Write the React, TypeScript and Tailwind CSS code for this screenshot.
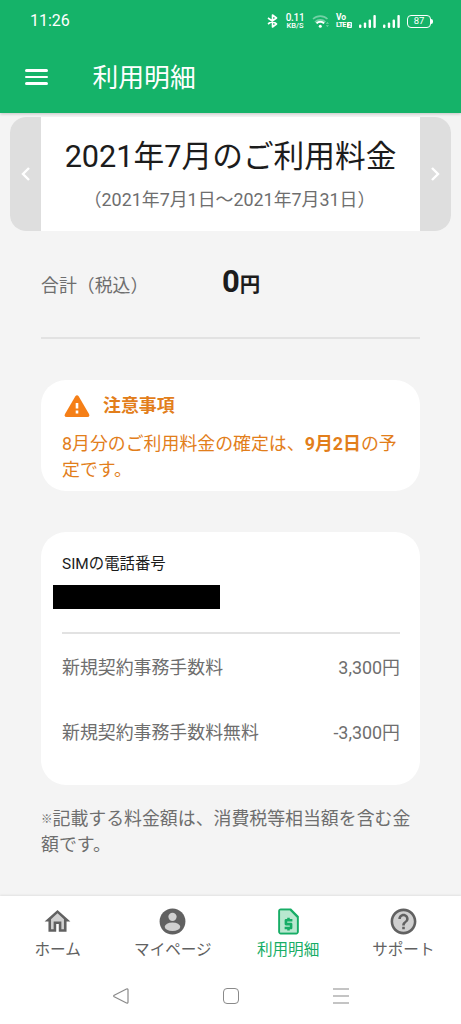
import { ReactNode } from "react";

interface FeeProps {
    name: string
    price: string
}

interface NavItemProps {
    label: string
    active?: boolean
    children: ReactNode
}

const fees: FeeProps[] = [
    { name: '新規契約事務手数料', price: '3,300円' },
    { name: '新規契約事務手数料無料', price: '-3,300円' },
]

function SignalIcon() {
    return (
        <svg className="h-[13px] w-[17px]" viewBox="0 0 17 13" fill="currentColor">
            <rect x="0" y="9.5" width="2.4" height="3.5" rx="1" />
            <rect x="4.8" y="7.5" width="2.4" height="5.5" rx="1" />
            <rect x="9.6" y="4.5" width="2.4" height="8.5" rx="1" />
            <rect x="14.4" y="0" width="2.4" height="13" rx="1" />
        </svg>
    )
}

function StatusBar() {
    return (
        <div className="flex h-[42px] items-center pl-[30px] pr-[28px]">
            <span className="text-[16px] leading-none">11:26</span>
            <div className="ml-auto flex items-center">
                <svg className="h-[14px] w-[11px]" viewBox="0 0 11 14" fill="none" stroke="currentColor" strokeWidth="1.6" strokeLinejoin="round">
                    <path d="M1 4l8.5 6L5.5 13V1l4 3L1 10" />
                </svg>
                <div className="ml-[7px] flex w-[20px] flex-col items-center font-medium">
                    <span className="text-[10px] leading-[9px] tracking-[-0.3px]">0.11</span>
                    <span className="text-[7.5px] leading-[8px]">KB/S</span>
                </div>
                <svg className="ml-[7px] h-[14px] w-[18px]" viewBox="0 0 18 14" fill="none" stroke="currentColor" strokeWidth="1.6">
                    <path d="M1 5a10.500 10.500 0 0 1 14.500 0M3 8a7.500 7.500 0 0 1 10.500 0" opacity=".4" />
                    <path d="M4.500 9.400a5.200 5.200 0 0 1 7.600 0" strokeWidth="2.100" />
                    <circle cx="8.300" cy="12.200" r="1.500" fill="currentColor" stroke="none" />
                    <path d="M13.800 9.800l1.600-1.800 1.600 1.800zM13.800 11.200l1.600 1.800 1.600-1.800z" fill="currentColor" stroke="none" opacity=".4" />
                </svg>
                <div className="ml-[6px] flex w-[17px] flex-col font-bold">
                    <span className="text-[8.5px] leading-[7px]">Vo</span>
                    <span className="flex items-center text-[7.5px] leading-[7px] tracking-[-0.8px]">
                        LTE
                        <span className="ml-[1.5px] h-[6px] w-[5px] shrink-0 rounded-[1px] bg-white text-center text-[5px] leading-[6px] tracking-normal text-[#15b369]">2</span>
                    </span>
                </div>
                <div className="ml-[6px] flex gap-[7px]">
                    <SignalIcon />
                    <SignalIcon />
                </div>
                <div className="ml-[7px] flex items-center">
                    <span className="flex h-[13px] w-[24px] items-center justify-center rounded-[4px] border-[1.5px] border-white text-[9.5px] leading-none">87</span>
                    <span className="h-[5px] w-[2px] rounded-r-sm bg-white" />
                </div>
            </div>
        </div>
    )
}

function NavItem({ label, active, children }: NavItemProps) {
    return (
        <a className={`flex flex-1 flex-col items-center ${active ? 'text-[#17ad66]' : 'text-[#616161]'}`}>
            <svg className="mt-[10px] h-[31px] w-[31px]" viewBox="0 0 24 24" fill="currentColor">
                {children}
            </svg>
            <span className="mt-[2px] text-[15.6px] leading-[22px]">{label}</span>
        </a>
    )
}

export default function App() {
    return (
        <div className="flex h-[1024px] w-full flex-col overflow-hidden bg-[#f4f4f4] font-[Roboto,'Noto_Sans_CJK_JP',sans-serif] text-[#6e6e6e]" lang="ja">
            <header className="z-10 h-[113px] shrink-0 bg-[#15b369] text-white shadow-[0_1px_3px_rgba(0,0,0,0.2)]">
                <StatusBar />
                <div className="flex h-[70px] items-center pl-[25px]">
                    <div className="flex w-[23px] flex-col gap-[4px]">
                        <span className="h-[2.500px] rounded-full bg-white" />
                        <span className="h-[2.500px] rounded-full bg-white" />
                        <span className="h-[2.500px] rounded-full bg-white" />
                    </div>
                    <h1 className="ml-[44.5px] pt-[4px] text-[25.8px] leading-none">利用明細</h1>
                </div>
            </header>

            <main className="flex-1">
                <section className="mx-[10px] mt-[4px] flex h-[114px] overflow-hidden rounded-[16px] bg-white">
                    <button className="flex w-[31px] items-center justify-center bg-[#dedede]">
                        <svg className="h-[14px] w-[9px]" viewBox="0 0 9 14" fill="none" stroke="white" strokeWidth="2.4">
                            <path d="M8 1L2 7l6 6" />
                        </svg>
                    </button>
                    <div className="flex-1 text-center">
                        <h2 className="mt-[17px] text-[30.7px] leading-[46px] whitespace-nowrap text-[#1c1c1c]">2021年7月のご利用料金</h2>
                        <p className="mt-[7px] pr-[2px] text-[17.9px] leading-[26px] whitespace-nowrap">（2021年7月1日～2021年7月31日）</p>
                    </div>
                    <button className="flex w-[31px] items-center justify-center bg-[#dedede]">
                        <svg className="h-[14px] w-[9px]" viewBox="0 0 9 14" fill="none" stroke="white" strokeWidth="2.4">
                            <path d="M1 1l6 6-6 6" />
                        </svg>
                    </button>
                </section>

                <div className="mx-[41px]">
                    <section className="flex h-[108px] items-baseline border-b-2 border-[#e2e2e2] pt-[28px]">
                        <span className="w-[181px] text-[17.9px]">合計（税込）</span>
                        <span className="text-[31px] font-bold text-[#1c1c1c]">0<span className="text-[20.500px]">円</span></span>
                    </section>

                    <section className="mt-[41px] h-[111px] rounded-[25px] bg-white px-[21px] pt-[13px] text-[17.9px] leading-[26px] text-[#e27e1b]">
                        <div className="flex items-center">
                            <svg className="ml-[2px] h-[24px] w-[26px]" viewBox="0 0 26 24">
                                <path d="M11.200 2.500q1.800-2.600 3.600 0l10.200 17.500q1.200 3-1.800 3H2.800q-3 0-1.800-3z" fill="#f57f17" />
                                <path d="M13 9v5.500M13 16.500v3" stroke="white" strokeWidth="2.600" />
                            </svg>
                            <h3 className="ml-[13px] font-bold">注意事項</h3>
                        </div>
                        <div className="mt-[12px] whitespace-nowrap">
                            <p>8月分のご利用料金の確定は、<b>9月2日</b>の予</p>
                            <p>定です。</p>
                        </div>
                    </section>

                    <section className="mt-[41px] h-[253px] rounded-[25px] bg-white pl-[21px] pr-[20px] pt-[21px]">
                        <p className="text-[15.4px] leading-[23px] text-[#1c1c1c]">SIMの電話番号</p>
                        <div className="mt-[9px] -ml-[9px] h-[24px] w-[167px] bg-black" />
                        <div className="mt-[23px] border-b-2 border-[#e2e2e2]" />
                        <div className="mt-[21px] flex flex-col gap-[39px]">
                            {fees.map((fee: FeeProps) => (
                                <div key={fee.name} className="flex justify-between text-[17.9px] leading-[26px]">
                                    <span>{fee.name}</span>
                                    <span>{fee.price}</span>
                                </div>
                            ))}
                        </div>
                    </section>

                    <p className="mt-[21px] text-[17.9px] leading-[26px]">
                        <span className="inline-block w-[11.5px] align-[2px] text-[11.5px] leading-none">※</span>記載する料金額は、消費税等相当額を含む金<br />額です。
                    </p>
                </div>
            </main>

            <footer className="h-[128px] shrink-0 bg-white shadow-[0_-1px_2px_rgba(0,0,0,0.08)]">
                <nav className="flex h-[78px]">
                    <NavItem label="ホーム">
                        <path d="M12 4.300l6 5.500V19h-4v-6h-4v6H6V9.800z" fill="#d0d0d0" />
                        <path d="M12 5.690l5 4.500V18h-2v-6H9v6H7v-7.810l5-4.500M12 3L2 12h3v8h6v-6h2v6h6v-8h3L12 3z" />
                    </NavItem>
                    <NavItem label="マイページ">
                        <circle cx="12" cy="12" r="10" />
                        <circle cx="12" cy="8.400" r="3.200" fill="#d0d0d0" />
                        <ellipse cx="12" cy="16.100" rx="6" ry="3.300" fill="#d0d0d0" />
                    </NavItem>
                    <NavItem label="利用明細" active>
                        <path d="M5.500 3.500h8.500l5 5v12h-13.500z" fill="#b9e8d0" />
                        <path d="M14 2H6c-1.100 0-2 .900-2 2v16c0 1.100.900 2 2 2h12c1.100 0 2-.900 2-2V8l-6-6zm4.500 18.500H5.500V3.500H13L18.500 9v11.500z" />
                        <path d="M11 19h2v-1h1c.55 0 1-.45 1-1v-3c0-.55-.45-1-1-1h-3v-1h4v-2h-2V9h-2v1h-1c-.55 0-1 .45-1 1v3c0 .55.45 1 1 1h3v1H9v2h2v1z" />
                    </NavItem>
                    <NavItem label="サポート">
                        <circle cx="12" cy="12" r="9" fill="#d0d0d0" />
                        <path d="M11 18h2v-2h-2v2zm1-16C6.480 2 2 6.480 2 12s4.480 10 10 10 10-4.480 10-10S17.520 2 12 2zm0 18c-4.410 0-8-3.590-8-8s3.590-8 8-8 8 3.590 8 8-3.590 8-8 8zm0-14c-2.210 0-4 1.790-4 4h2c0-1.100.900-2 2-2s2 .900 2 2c0 2-3 1.750-3 5h2c0-2.250 3-2.500 3-5 0-2.210-1.790-4-4-4z" />
                    </NavItem>
                </nav>
                <div className="flex items-center justify-center gap-[94px] pt-[13px] text-[#8a8a8a]">
                    <svg className="h-[18px] w-[16px]" viewBox="0 0 16 18" fill="none" stroke="currentColor" strokeWidth="1.200" strokeLinejoin="round">
                        <path d="M1.200 8.200Q.200 9 1.200 9.800L13.500 16q1.500.500 1.500-1V3q0-1.500-1.500-1z" />
                    </svg>
                    <span className="h-[16px] w-[16px] rounded-[4px] border-[1.200px] border-[#8a8a8a]" />
                    <svg className="h-[18px] w-[16px]" viewBox="0 0 16 18" fill="none" stroke="currentColor" strokeWidth="1.200">
                        <path d="M0 2h16M0 9h16M0 16h16" />
                    </svg>
                </div>
            </footer>
        </div>
    )
}
